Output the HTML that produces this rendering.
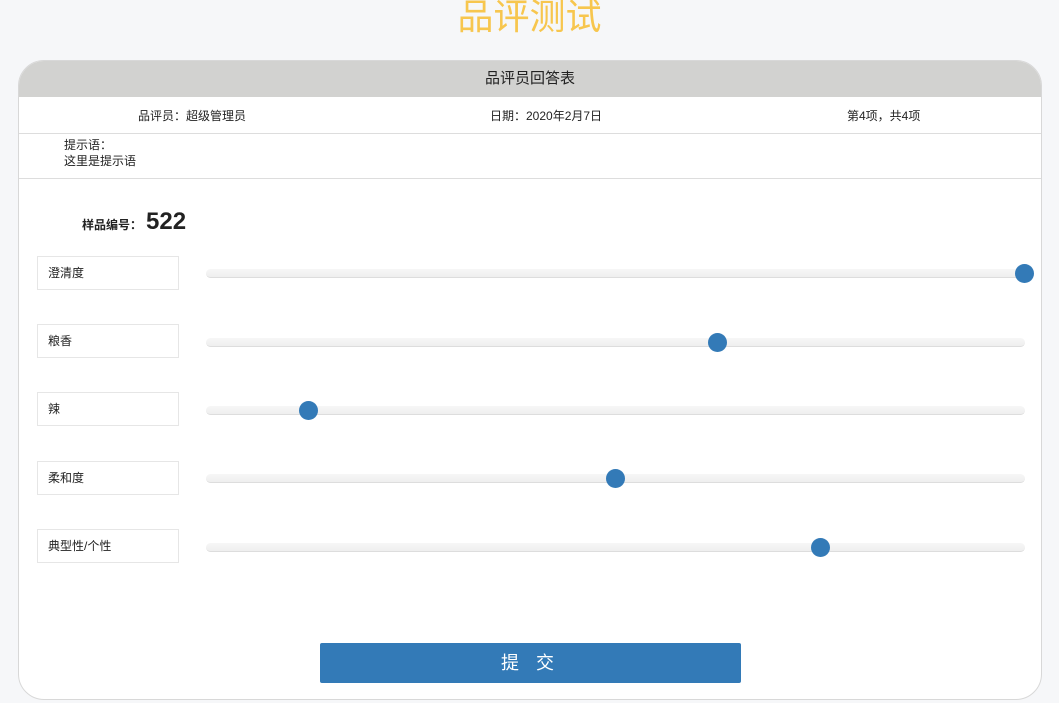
<!DOCTYPE html>
<html><head><meta charset="utf-8"><style>
body{margin:0;width:1059px;height:703px;background:#f6f7f9;font-family:"Liberation Sans","Noto Sans CJK SC",sans-serif;position:relative;overflow:hidden;color:#222}
.title{position:absolute;top:-5px;left:0;width:1059px;text-align:center;font-size:36px;color:#f7c64e;line-height:44px}
.card{position:absolute;left:18px;top:60px;width:1024px;height:640px;background:#fff;border:1px solid #d8d8d8;border-radius:26px;overflow:hidden;box-sizing:border-box}
.hd{height:36px;background:#d2d2d0;text-align:center;line-height:36px;font-size:15px;color:#222}
.info{height:36px;border-bottom:1px solid #ddd;position:relative;font-size:12px}
.info span{position:absolute;top:10px}
.hint{height:45px;border-bottom:1px solid #ddd;font-size:12px;padding-left:45px;line-height:16px;padding-top:3px;box-sizing:border-box}
.no{position:absolute;left:63px;top:147px;font-size:12px;font-weight:bold}
.no b{font-size:24px;margin-left:4px}
.lbl{position:absolute;left:18px;width:142px;height:34px;border:1px solid #e6e6e6;box-sizing:border-box;font-size:12px;line-height:32px;padding-left:10px}
.trk{position:absolute;left:187px;width:819px;height:9px;border-radius:5px;background:linear-gradient(#f7f7f7,#efefef);border-bottom:1px solid #ddd;box-sizing:border-box}
.th{position:absolute;width:19px;height:19px;border-radius:50%;background:#337ab7;top:-5px;margin-left:-9px}
.btn{position:absolute;left:301px;top:582px;width:421px;height:40px;background:#337ab7;color:#fff;text-align:center;line-height:40px;font-size:18px;border-radius:2px;letter-spacing:6px}
</style></head><body>
<div class="title">品评测试</div>
<div class="card">
<div class="hd">品评员回答表</div>
<div class="info"><span style="left:119px">品评员：超级管理员</span><span style="left:471px">日期：2020年2月7日</span><span style="left:828px">第4项，共4项</span></div>
<div class="hint">提示语：<br>这里是提示语</div>
<div class="no">样品编号：<b>522</b></div>
<div class="lbl" style="top:195px">澄清度</div><div class="trk" style="top:208px"><div class="th" style="left:818px"></div></div>
<div class="lbl" style="top:263px">粮香</div><div class="trk" style="top:277px"><div class="th" style="left:511px"></div></div>
<div class="lbl" style="top:331px">辣</div><div class="trk" style="top:345px"><div class="th" style="left:102px"></div></div>
<div class="lbl" style="top:400px">柔和度</div><div class="trk" style="top:413px"><div class="th" style="left:409px"></div></div>
<div class="lbl" style="top:468px">典型性/个性</div><div class="trk" style="top:482px"><div class="th" style="left:614px"></div></div>
<div class="btn">提 交</div>
</div>
</body></html>
